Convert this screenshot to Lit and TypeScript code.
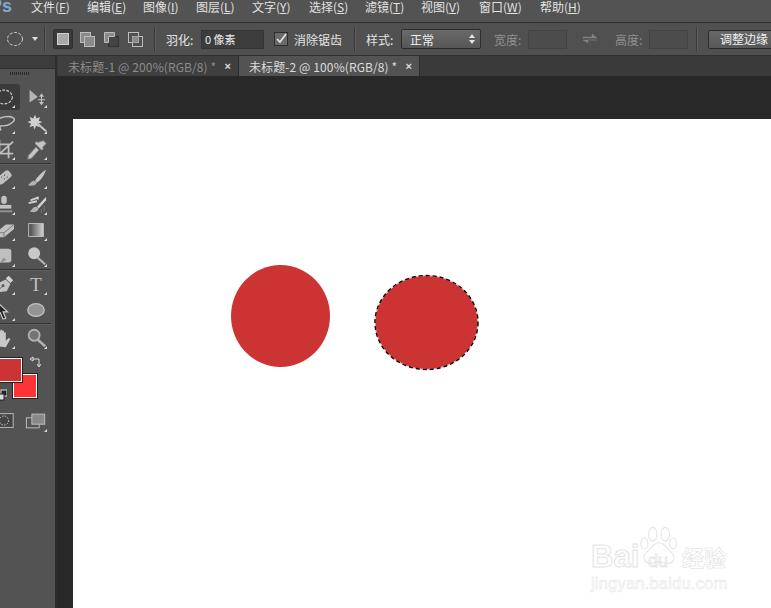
import { LitElement, html, css, svg } from "lit";
import { customElement } from "lit/decorators.js";

const menus: [string, string][] = [["文件", "F"], ["编辑", "E"], ["图像", "I"], ["图层", "L"], ["文字", "Y"], ["选择", "S"], ["滤镜", "T"], ["视图", "V"], ["窗口", "W"], ["帮助", "H"]];
const menuWidths = [56, 56, 53, 56, 57, 56, 56, 58, 61, 50];

const tools: any[] = [
  [svg`<ellipse cx="12" cy="12" rx="9" ry="7.5" fill="none" stroke="#ddd" stroke-width="1.3" stroke-dasharray="3 1.6"/>`, svg`<path d="M5 4l0 14 9-6z" fill="#bdbdbd"/><path d="M18 10v9M14 15h8M18 9l-1.5 2h3zM18 20l-1.5-2h3z" stroke="#ccc" stroke-width="1.2" fill="#ccc"/>`],
  [svg`<path d="M3 12c2-7 16-9 20-5 2 4-8 9-14 8-2 0-2 3 0 5" fill="none" stroke="#ccc" stroke-width="1.5"/>`, svg`<path d="M11 3l1.5 4 4-1.5-1.5 4 4 1.500-4 1.500 1 4-4-1.500-1.500 4-1.500-4-4 1.500 1.500-4-4-1.500 4-1.500-1.500-4 4 1.500z" fill="#ddd"/><path d="M13 12l10 9" stroke="#ccc" stroke-width="2.200"/>`],
  [svg`<path d="M7 2v15h15M2 7h15v15M4 20L22 4" fill="none" stroke="#c9c9c9" stroke-width="2"/>`, svg`<path d="M20 3l3 3-4 4 1 2-2 1-7-7 1-2 2 1zM12 10l-8 9-1 4 4-1 8-9" fill="#d0d0d0" stroke="#999"/>`],
  "a",
  [svg`<rect x="4" y="7" width="17" height="9" rx="3" transform="rotate(-40 12 12)" fill="#c9c9c9"/><path d="M9 11h1M12 9h1M12 13h1M15 11h1" stroke="#555" stroke-width="1.400"/>`, svg`<path d="M23 3C18 6 13 11 11 15l2 2c4-2 8-8 10-14z" fill="#d0d0d0"/><path d="M10 15c-3 0-4 3-7 5 3 1 9 1 10-3z" fill="#bbb"/>`],
  [svg`<rect x="9" y="3" width="6" height="9" rx="3" fill="#ccc"/><path d="M4 13h16v4H4z" fill="#ccc"/><path d="M3 19h18v2H3z" fill="#999"/>`, svg`<path d="M6 8l8-3v2M4 11l9-2" stroke="#ddd" stroke-width="2" fill="none"/><path d="M23 4L13 15l2 2 8-9z" fill="#ddd"/><path d="M12 15c-4 0-4 4-7 5 4 2 9 1 10-3z" fill="#bbb"/><path d="M18 18v4M21 14v6" stroke="#aaa" stroke-dasharray="1 1"/>`],
  [svg`<path d="M3 15L14 6h9v5L12 20H3z" fill="#ccc"/><path d="M3 15h9v5M12 15L23 6" stroke="#777" fill="none"/>`, svg`<defs><linearGradient id="gr"><stop offset="0" stop-color="#444"/><stop offset="1" stop-color="#ddd"/></linearGradient></defs><rect x="4" y="5" width="16" height="14" fill="url(#gr)" stroke="#ccc"/>`],
  [svg`<rect x="3" y="4" width="17" height="15" rx="3" fill="#c9c9c9"/><path d="M8 20l3-6 4 2" fill="#999"/>`, svg`<circle cx="10" cy="9" r="6.500" fill="#d2d2d2"/><path d="M14 14l8 7" stroke="#bbb" stroke-width="2.400"/>`],
  "b",
  [svg`<path d="M3 21l3-10 8-4 5 5-4 8z" fill="#ccc"/><path d="M14 6l3-3 5 5-3 3z" fill="#ddd"/><circle cx="11" cy="14" r="1.600" fill="#555"/><path d="M3 21l7-6" stroke="#555"/>`, svg`<text x="12" y="20" text-anchor="middle" font-family="'Liberation Serif',serif" font-size="21" fill="#c8c8c8">T</text>`],
  [svg`<path d="M4 3l0 15 4-3 3 7 3-1-3-7h5z" fill="#222" stroke="#ddd" stroke-width="1.200"/>`, svg`<ellipse cx="12" cy="12" rx="9" ry="7" fill="#9a9a9a" stroke="#ccc" stroke-width="1.400"/>`],
  "c",
  [svg`<path d="M6 21c-2-3-3-5-4-8l2-1 2 3V5h2v6-8h2v8-7h2v7-5h2v9l3-3 2 1-5 9z" fill="#d4d4d4"/>`, svg`<circle cx="10" cy="9" r="6" fill="#777" stroke="#bbb" stroke-width="2"/><path d="M14 14l8 7" stroke="#bbb" stroke-width="2.800"/>`],
];

@customElement("app-root")
export class AppRoot extends LitElement {
  static styles = css`
    :host { display: block; width: 771px; height: 608px; overflow: hidden; background: #282828; font-family: "Noto Sans CJK SC", "Liberation Sans", sans-serif; font-size: 12px; color: #e2e2e2; }
    .menu { height: 22px; background: #535353; display: flex; align-items: flex-start; overflow: hidden; }
    .ps { width: 31px; margin-left: -10px; flex: none; font: bold 18px/12px "Liberation Sans", sans-serif; color: #7fa7cf; padding-right: 10px; }
    .mi { flex: none; white-space: nowrap; font-size: 12px; line-height: 14px; }
    .mi u { text-underline-offset: 1px; }
    .opts { height: 32px; background: #505050; border-top: 1px solid #2f2f2f; border-bottom: 1px solid #2f2f2f; display: flex; align-items: center; white-space: nowrap; }
    .sep { flex: none; width: 1px; height: 24px; background: #3a3a3a; border-right: 1px solid #5e5e5e; }
    .ic { flex: none; display: block; }
    .b20 { width: 20px; height: 20px; display: flex; align-items: center; justify-content: center; flex: none; }
    .active { background: #393939; border: 1px solid #303030; border-radius: 2px; box-sizing: border-box; }
    .lbl { flex: none; font-size: 12px; color: #e4e4e4; }
    .dim { color: #8f8f8f; }
    .input { flex: none; width: 63px; height: 19px; box-sizing: border-box; background: #3c3c3c; border: 1px solid #333; color: #eee; font-size: 11px; line-height: 17px; padding-left: 3px; }
    .check { flex: none; width: 14px; height: 14px; box-sizing: border-box; background: #6a6a6a; border: 1px solid #2e2e2e; display: flex; }
    .select { flex: none; width: 80px; height: 20px; box-sizing: border-box; background: linear-gradient(#6a6a6a, #565656); border: 1px solid #2c2c2c; border-radius: 2px; display: flex; align-items: center; justify-content: space-between; padding: 0 4px 0 8px; color: #f0f0f0; }
    .emp { flex: none; width: 39px; height: 19px; box-sizing: border-box; background: #4c4c4c; border: 1px solid #434343; }
    .btn { flex: none; width: 80px; height: 19px; box-sizing: border-box; background: linear-gradient(#676767, #585858); border: 1px solid #2c2c2c; border-radius: 2px; color: #f0f0f0; padding-left: 11px; line-height: 16px; }
    .main { display: flex; height: 552px; }
    .side { flex: none; width: 57px; box-sizing: border-box; background: #535353; border-right: 2px solid #2c2c2c; overflow: hidden; }
    .side-h { height: 12px; background: #3c3c3c; border-bottom: 1px solid #2f2f2f; }
    .grip { margin: 3px 0 0 10px; width: 19px; height: 3px; background: repeating-linear-gradient(90deg, #2b2b2b 0 1px, transparent 1px 2px); }
    .tools { margin: 9px 0 0 -12px; width: 64px; }
    .tr { display: flex; height: 26px; }
    .t { width: 32px; height: 26px; position: relative; display: flex; align-items: center; justify-content: center; flex: none; }
    .t svg { width: 22px; height: 22px; opacity: .92; }
    .t.on { background: #3b3b3b; border-radius: 3px; }
    .t::after { content: ""; position: absolute; right: 5px; bottom: 2px; border-left: 3px solid transparent; border-bottom: 3px solid #ddd; }
    .t.no::after { display: none; }
    .div { height: 1px; background: #333; margin-left: 12px; width: 51px; border-bottom: 1px solid #5f5f5f; }
    .div.first { margin-top: 1px; }
    .colors { position: relative; height: 50px; margin: 5px 0 0 -11px; }
    .sw { position: absolute; box-sizing: border-box; border: 1px solid #fff; outline: 1px solid #222; }
    .fg { left: 9px; top: 2px; width: 24px; height: 24px; background: #cc3333; z-index: 1; }
    .bg { left: 24px; top: 18px; width: 24px; height: 24px; background: #ff3333; }
    .swap { position: absolute; left: 40px; top: 0; }
    .reset { position: absolute; left: 4px; top: 33px; }
    .tools.mode { margin-top: 2px; }
    .doc { flex: 1; min-width: 0; display: flex; flex-direction: column; }
    .tabs { height: 20px; background: #3a3a3a; display: flex; border-bottom: 1px solid #2a2a2a; flex: none; padding-left: 1px; }
    .tab { flex: none; width: 181px; height: 20px; box-sizing: border-box; padding: 0 7px 0 10px; display: flex; align-items: center; justify-content: space-between; font-size: 12px; letter-spacing: .1px; color: #8c8c8c; background: #3f3f3f; border-right: 1px solid #2c2c2c; white-space: nowrap; }
    .tab.cur { background: #535353; color: #dcdcdc; }
    .tab i { font-style: normal; color: #ddd; font-size: 11px; font-family: "Liberation Sans", sans-serif; font-weight: bold; }
    .stage { flex: 1; background: #282828; padding: 42px 0 0 16px; }
    .paper { width: 698px; height: 489px; background: #fff; position: relative; overflow: hidden; }
    .art { display: block; position: absolute; inset: 0; }
    .wm { position: absolute; left: 518px; top: 410px; width: 170px; height: 70px; color: transparent; -webkit-text-stroke: 1px #e4e4e4; font-family: "Liberation Sans", sans-serif; }
    .wm span { position: absolute; white-space: nowrap; }
    .wm .bai { left: 0; top: 10px; font-size: 31px; font-weight: bold; line-height: 36px; }
    .wm .du { left: 57px; top: 22px; font-size: 18px; line-height: 20px; -webkit-text-stroke: .8px #e4e4e4; }
    .wm .jy { left: 91px; top: 10px; font-size: 22px; font-family: "Noto Sans CJK SC", sans-serif; line-height: 34px; -webkit-text-stroke: 0.7px #e4e4e4; font-weight: 700; }
    .wm .url { left: 0; top: 44px; font-size: 16.5px; line-height: 20px; letter-spacing: 0.2px; -webkit-text-stroke: 0.6px #e8e8e8; }
    .paw { position: absolute; left: 47px; top: -4px; }
  `;

  private sq(kind: number) {
    const s = "#bdbdbd";
    if (kind === 0) return svg`<rect x="3.500" y="3.500" width="11" height="11" fill="#a8a8a8" stroke="#cfcfcf"/>`;
    if (kind === 1) return svg`<rect x="2.500" y="2.500" width="10" height="10" fill="#8a8a8a" stroke="${s}"/><rect x="6.500" y="6.500" width="10" height="10" fill="#8a8a8a" stroke="${s}"/>`;
    if (kind === 2) return svg`<rect x="6.500" y="6.500" width="10" height="10" fill="#444" stroke="#333"/><path d="M2.500 12.500v-10h10v4h-6v6z" fill="#8a8a8a" stroke="${s}"/>`;
    return svg`<rect x="2.500" y="2.500" width="10" height="10" fill="none" stroke="${s}"/><rect x="6.500" y="6.500" width="10" height="10" fill="none" stroke="${s}"/><rect x="6.500" y="6.500" width="6" height="6" fill="#8a8a8a"/>`;
  }

  render() {
    let idx = 0;
    return html`
      <div class="menu">
        <div class="ps">Ps</div>
        ${menus.map(([n, k], i) => html`<div class="mi" style="width:${menuWidths[i]}px">${n}(<u>${k}</u>)</div>`)}
      </div>
      <div class="opts">
        <svg class="ic" style="margin-left:6px" width="18" height="18" viewBox="0 0 18 18"><ellipse cx="9" cy="9" rx="7.500" ry="6.500" fill="none" stroke="#cfcfcf" stroke-dasharray="3 1.500"/></svg>
        <svg class="ic" style="margin-left:8px" width="7" height="4" viewBox="0 0 7 4"><path d="M0 0h6L3 4z" fill="#ddd"/></svg>
        <div class="sep" style="margin-left:5px"></div>
        <div class="b20 active" style="margin-left:7px"><svg width="18" height="18">${this.sq(0)}</svg></div>
        <div class="b20" style="margin-left:4px"><svg width="18" height="18">${this.sq(1)}</svg></div>
        <div class="b20" style="margin-left:4px"><svg width="18" height="18">${this.sq(2)}</svg></div>
        <div class="b20" style="margin-left:4px"><svg width="18" height="18">${this.sq(3)}</svg></div>
        <div class="sep" style="margin-left:9px"></div>
        <div class="lbl" style="margin-left:10px;width:35px">羽化:</div>
        <div class="input">0 像素</div>
        <div class="check" style="margin-left:10px"><svg width="12" height="12" viewBox="0 0 12 12"><path d="M2 6l3 3 6-8" fill="none" stroke="#e8e8e8" stroke-width="1.600"/></svg></div>
        <div class="lbl" style="margin-left:6px;width:46px;white-space:nowrap">消除锯齿</div>
        <div class="sep" style="margin-left:14px"></div>
        <div class="lbl" style="margin-left:10px;width:35px">样式:</div>
        <div class="select"><span>正常</span><svg width="7" height="10" viewBox="0 0 7 10"><path d="M0 4h6L3 0zM0 6h6L3 10z" fill="#e4e4e4"/></svg></div>
        <div class="lbl dim" style="margin-left:13px;width:34px">宽度:</div>
        <div class="emp"></div>
        <svg class="ic" style="margin-left:15px" width="16" height="14" viewBox="0 0 16 14"><path d="M1 5h9V2l5 4H1zM15 8H6v3L1 8h14z" fill="#868686" stroke="#868686" stroke-width=".4"/></svg>
        <div class="lbl dim" style="margin-left:17px;width:34px">高度:</div>
        <div class="emp"></div>
        <div class="sep" style="margin-left:8px"></div>
        <div class="btn" style="margin-left:10px">调整边缘</div>
      </div>
      <div class="main">
        <div class="side">
          <div class="side-h"></div>
          <div class="grip"></div>
          <div class="tools">
            ${tools.map((row) => {
              if (typeof row === "string") return html`<div class="div ${row === "a" ? "first" : ""}"></div>`;
              const i = idx++;
              return html`<div class="tr">
                ${row.map((ic: any, j: number) => html`<div class="t ${i === 0 && j === 0 ? "on" : ""} ${i === 8 && j === 1 ? "no" : ""}"><svg viewBox="0 0 24 24">${ic}</svg></div>`)}
              </div>`;
            })}
          </div>
          <div class="colors">
            <div class="sw fg"></div>
            <div class="sw bg"></div>
            <svg class="swap" width="12" height="12" viewBox="0 0 12 12"><path d="M1 3l3-2v4zM4 3h6v7M8 8l2 3 2-3" fill="none" stroke="#ddd"/></svg>
            <svg class="reset" width="14" height="12" viewBox="0 0 14 12"><rect x="8" y="1" width="6" height="6" fill="#222" stroke="#ddd"/><rect x="4" y="5" width="7" height="6" fill="#ddd" stroke="#222"/></svg>
          </div>
          <div class="tools mode">
            <div class="tr">
              <div class="t no"><svg viewBox="0 0 24 24"><rect x="2" y="4" width="20" height="15" fill="#444" stroke="#ccc"/><ellipse cx="12" cy="11.500" rx="5" ry="5" fill="none" stroke="#eee" stroke-dasharray="1.500 1.500"/></svg></div>
              <div class="t"><svg viewBox="0 0 24 24"><rect x="1.500" y="8.500" width="14" height="11" fill="#555" stroke="#ccc"/><rect x="7.500" y="4.500" width="14" height="11" fill="#8e8e8e" stroke="#ccc"/></svg></div>
            </div>
          </div>
        </div>
        <div class="doc">
          <div class="tabs">
            <div class="tab"><span>未标题-1 @ 200%(RGB/8) *</span><i>×</i></div>
            <div class="tab cur"><span>未标题-2 @ 100%(RGB/8) *</span><i>×</i></div>
          </div>
          <div class="stage">
            <div class="paper">
              <svg class="art" width="698" height="489" viewBox="0 0 698 489">
                <ellipse cx="207.500" cy="197" rx="49.500" ry="51" fill="#cc3333"/>
                <ellipse cx="353.500" cy="203.500" rx="51.500" ry="47" fill="#cc3333" stroke="#f4c4c4" stroke-width="1"/>
                <ellipse cx="353.500" cy="203.500" rx="51.500" ry="47" fill="none" stroke="#000" stroke-width="1.400" stroke-dasharray="4 3"/>
              </svg>
              <div class="wm">
                <svg class="paw" width="42" height="46" viewBox="0 0 60 60" preserveAspectRatio="none" fill="none" stroke="#e4e4e4" stroke-width="1.500">
                  <ellipse cx="21" cy="12" rx="6" ry="9"/>
                  <ellipse cx="39" cy="12" rx="6" ry="9"/>
                  <ellipse cx="9" cy="24" rx="5" ry="7"/>
                  <ellipse cx="50" cy="24" rx="5" ry="7"/>
                  <path d="M30 23c9 0 12 9 18 13 7 6 2 15-7 14-4 0-7-2-11-2s-7 2-11 2c-9 1-14-8-7-14 6-4 9-13 18-13z"/>
                </svg>
                <span class="bai">Bai</span>
                <span class="du">du</span>
                <span class="jy">经验</span>
                <span class="url">jingyan.baidu.com</span>
              </div>
            </div>
          </div>
        </div>
      </div>
    `;
  }
}
